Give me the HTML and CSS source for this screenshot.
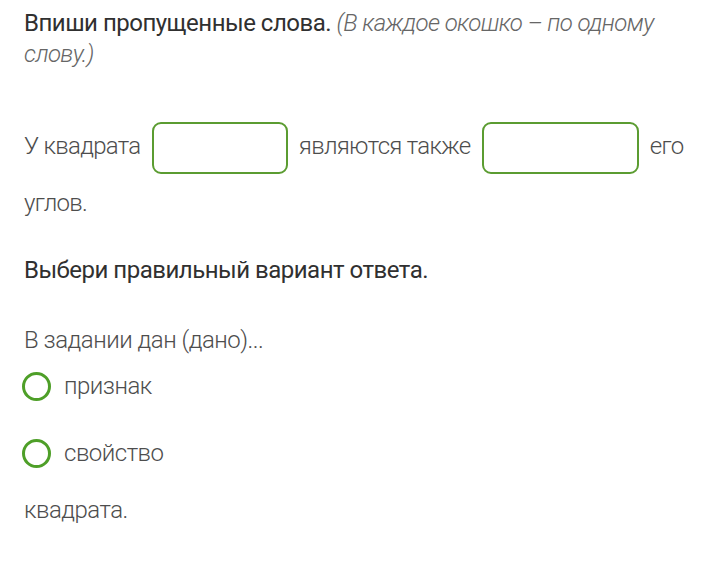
FILE: index.html
```html
<!DOCTYPE html>
<html lang="ru">
<head>
    <meta charset="UTF-8">
    <title>Задание</title>
    <link rel="stylesheet" href="styles.css">
</head>
<body>
    <div class="task">
        <p class="title">Впиши пропущенные слова. <em>(В каждое окошко – по одному слову.)</em></p>
        <p class="fill">
            У квадрата <input type="text" class="gap gap-short">
            являются также <input type="text" class="gap gap-long">
            его углов.
        </p>
    </div>

    <div class="task">
        <p class="title title-choice">Выбери правильный вариант ответа.</p>
        <p class="question">В задании дан (дано)...</p>
        <label class="option"><span class="radio"></span>признак</label>
        <label class="option"><span class="radio"></span>свойство</label>
        <p class="tail">квадрата.</p>
    </div>
</body>
</html>
```

FILE: styles.css
```css
body {
    font-family: 'Roboto', 'Liberation Sans', sans-serif;
    margin: 0;
    padding: 8px 24px 0 24px;
    background: #fff;
    color: #4d4d4d;
    font-size: 24px;
}
p {
    margin: 0;
}
.title {
    color: #303030;
    font-weight: 400;
    line-height: 31px;
    letter-spacing: -0.5px;
}
.title em {
    color: #666;
    font-weight: 300;
    letter-spacing: -0.6px;
}
.fill {
    margin-top: 48px;
    line-height: 57px;
    font-weight: 300;
    letter-spacing: -0.7px;
}
.gap {
    display: inline-block;
    vertical-align: middle;
    height: 52px;
    box-sizing: border-box;
    border: 2px solid #5b9c31;
    border-radius: 9px;
    margin: 0 6px;
    padding: 0 10px;
    font: inherit;
    outline: none;
    background: #fff;
}
.gap-short {
    width: 136px;
}
.gap-long {
    width: 157px;
}
.title-choice {
    margin-top: 23px;
}
.question {
    margin-top: 39px;
    line-height: 31px;
    font-weight: 300;
    letter-spacing: -0.5px;
}
.option {
    display: flex;
    align-items: center;
    gap: 13px;
    line-height: 31px;
    font-weight: 300;
    letter-spacing: -0.5px;
    margin-top: 15px;
    margin-left: -2px;
}
.option + .option {
    margin-top: 36px;
}
.radio {
    width: 29px;
    height: 29px;
    box-sizing: border-box;
    border: 3px solid #4e9f28;
    border-radius: 50%;
}
.tail {
    margin-top: 26px;
    line-height: 31px;
    font-weight: 300;
    letter-spacing: -0.5px;
}
```
